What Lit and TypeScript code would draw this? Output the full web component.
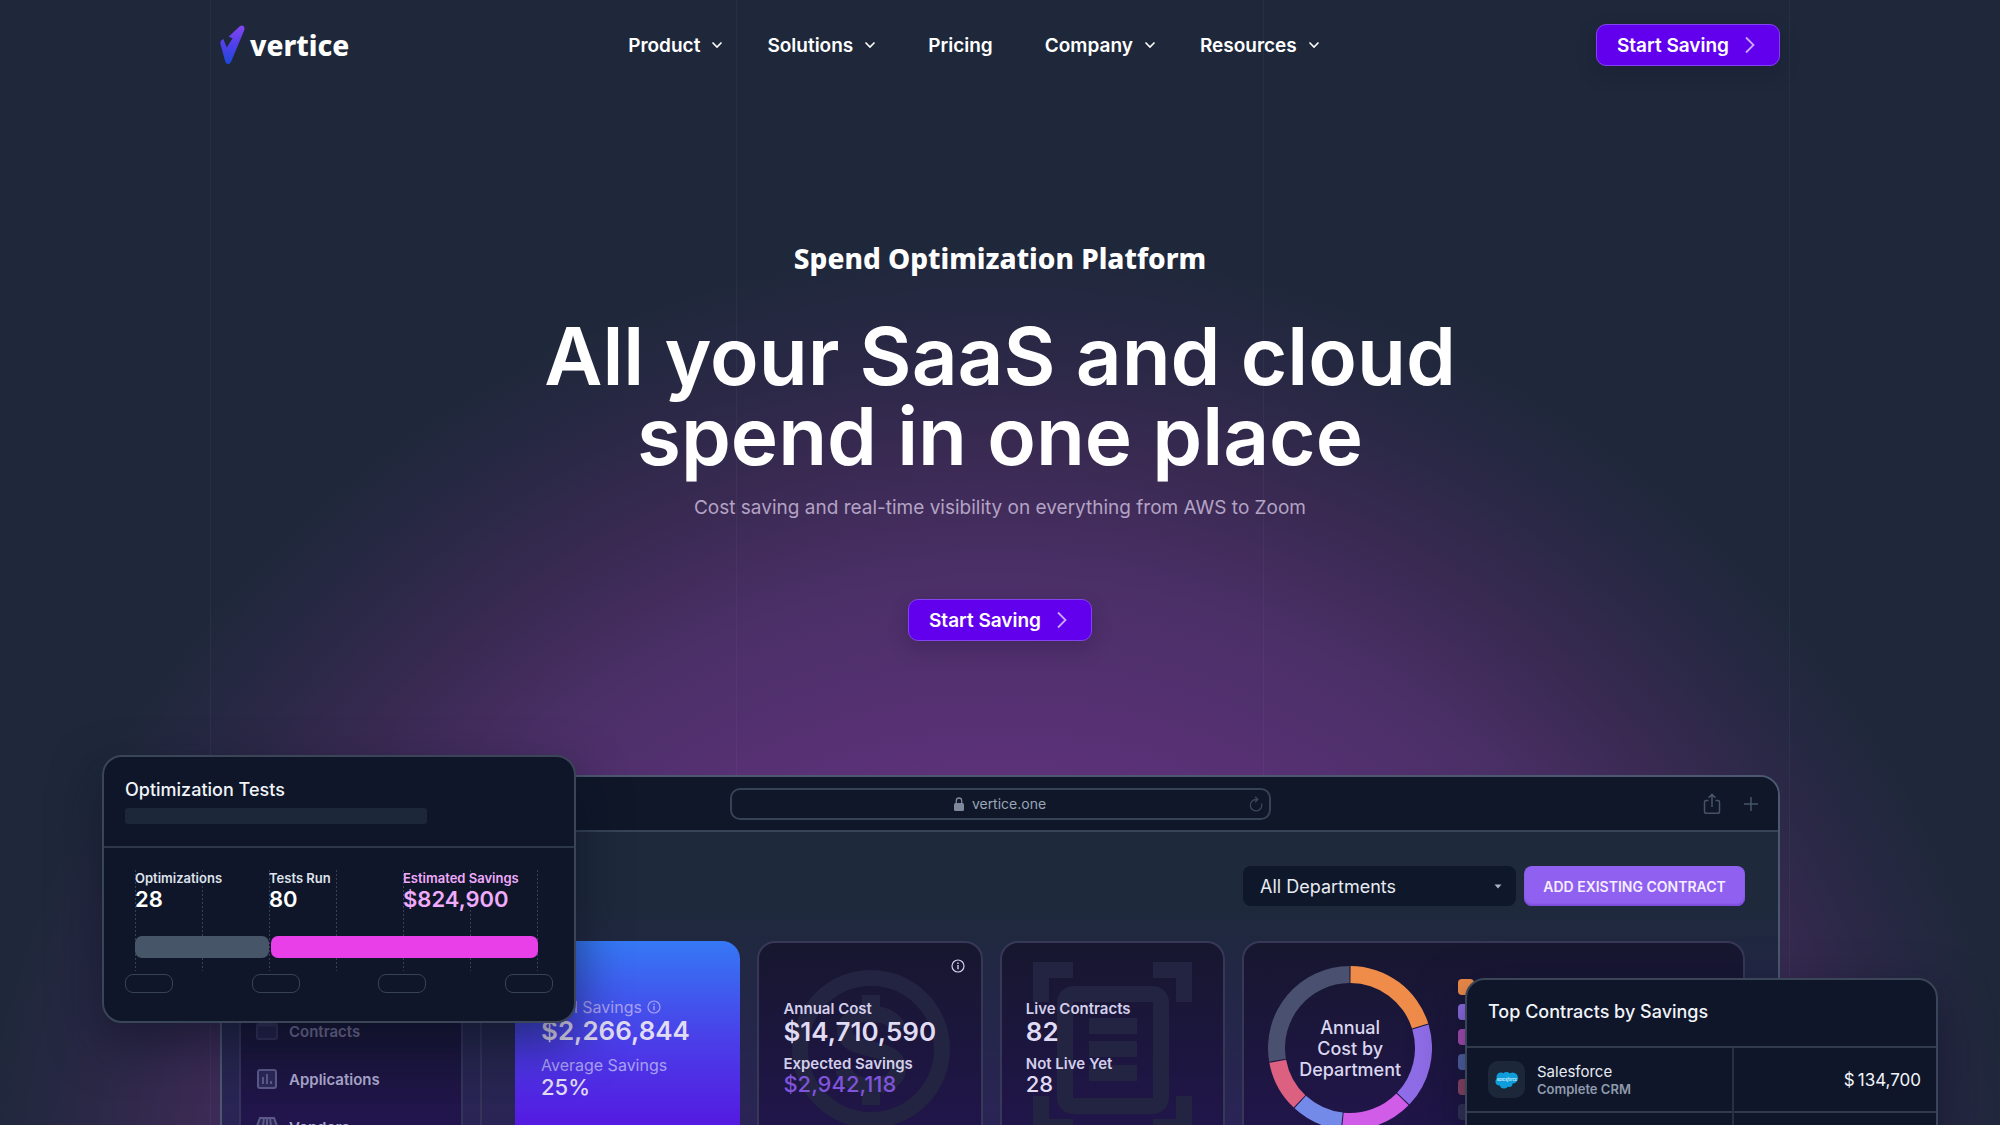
import { LitElement, html, svg, css } from "lit";
import { customElement } from "lit/decorators.js";

interface NavItem { label: string; menu: boolean; }
interface Slice { from: number; to: number; color: string; }

const NAV: NavItem[] = [
  { label: "Product", menu: true },
  { label: "Solutions", menu: true },
  { label: "Pricing", menu: false },
  { label: "Company", menu: true },
  { label: "Resources", menu: true },
];

const SLICES: Slice[] = [
  { from: 0, to: 73, color: "#f08c4a" },
  { from: 73, to: 134, color: "#8f6de8" },
  { from: 134, to: 186, color: "#d05ce8" },
  { from: 186, to: 223, color: "#738ae8" },
  { from: 223, to: 260, color: "#dc6080" },
  { from: 260, to: 360, color: "#4a5070" },
];

const LEGEND = ["#f08c4a", "#8f6de8", "#b350c0", "#5668b0", "#97486a", "#35335a"];

const chevronDown = html`<svg class="chev" viewBox="0 0 12 12" aria-hidden="true"><path d="M1.5 3.5 6 8l4.5-4.5" fill="none" stroke="currentColor" stroke-width="1.6"/></svg>`;
const chevronRight = html`<svg class="arrow" viewBox="0 0 10 18" aria-hidden="true"><path d="M1 1.5 8.5 9 1 16.5" fill="none" stroke="currentColor" stroke-width="1.8"/></svg>`;
const infoIcon = html`<svg class="info" viewBox="0 0 14 14" aria-hidden="true"><circle cx="7" cy="7" r="6" fill="none" stroke="currentColor" stroke-width="1.2"/><path d="M7 6v4.2M7 3.6v1.4" stroke="currentColor" stroke-width="1.4"/></svg>`;

function arc(s: Slice) {
  const at = (deg: number, r: number) => {
    const a = ((deg - 90) * Math.PI) / 180;
    return `${(82 + r * Math.cos(a)).toFixed(2)} ${(82 + r * Math.sin(a)).toFixed(2)}`;
  };
  const f = s.from + 0.4;
  const t = s.to - 0.4;
  return svg`<path fill=${s.color} d="M${at(f, 82)}A82 82 0 0 1 ${at(t, 82)}L${at(t, 65)}A65 65 0 0 0 ${at(f, 65)}Z"/>`;
}

@customElement("app-root")
export class AppRoot extends LitElement {
  static styles = css`
    :host { display: block; font-family: Inter, "Liberation Sans", sans-serif; color: #fff; }
    * { box-sizing: border-box; }
    h1, h2, p, dl, dd, ul { margin: 0; padding: 0; }
    svg { display: block; flex: none; }
    button { font: inherit; color: inherit; border: 0; cursor: pointer; }
    a { color: inherit; text-decoration: none; }

    .page {
      position: relative; height: 100vh; overflow: hidden;
      background: radial-gradient(circle 1040px at 50% 1276px, #68348a 30%, #5b3178 49%, #4b2f67 67%, #3a2a53 79%, #2a2846 89%, #1e283a 100%);
    }
    .guides {
      position: absolute; inset: 0; margin: 0 auto; width: calc(100% - 420px);
      display: grid; grid-template-columns: repeat(3, 1fr);
      border-right: 1px solid rgba(148, 163, 184, .07);
    }
    .guides span { border-left: 1px solid rgba(148, 163, 184, .07); }
    .wrap { position: relative; max-width: 1560px; margin: 0 auto; }

    .top { display: flex; justify-content: space-between; align-items: center; height: 90px; }
    .logo { display: flex; align-items: center; }
    .nav { display: flex; align-items: center; gap: 44px; list-style: none; font-size: 19px; font-weight: 600; }
    .nav a { display: flex; align-items: center; gap: 11px; }
    .nav .plain { padding: 0 8px; }
    .nav .chev { width: 12px; height: 12px; }
    .cta {
      display: inline-flex; align-items: center; gap: 16px; height: 42px; padding: 0 24px 0 20px;
      border: 1px solid #8442f0; border-radius: 10px; background: #6200ee;
      font-size: 19px; font-weight: 600; box-shadow: 0 8px 20px rgba(20, 10, 50, .2);
    }
    .cta .arrow { width: 10px; height: 18px; color: #c9a8fa; }

    .hero { display: flex; flex-direction: column; align-items: center; text-align: center; padding-top: 146px; }
    .eyebrow { font-family: "Noto Sans", sans-serif; font-size: 28px; font-weight: 800; line-height: 44px; }
    h1 { margin-top: 36px; max-width: 960px; font-size: 80px; font-weight: 600; line-height: 80px; }
    .sub { margin-top: 18px; font-size: 19px; line-height: 28px; color: #b3a3c4; }
    .hero .cta { margin-top: 77px; }

    .stage { position: relative; margin-top: 134px; }
    .browser {
      height: 420px; overflow: hidden; border: 2px solid #4b5870;
      border-radius: 20px 20px 0 0;
      background: linear-gradient(#1e293b 0, #1e293b 120px, #2a2456 350px);
    }
    .bar { display: grid; grid-template-columns: 1fr 541px 1fr; align-items: center; height: 55px; background: #0f1729; border-bottom: 2px solid #374357; }
    .url {
      grid-column: 2; display: grid; grid-template-columns: 1fr auto 1fr; align-items: center; height: 32px; padding: 0 6px;
      border: 2px solid #364255; border-radius: 10px; font-size: 14px; color: #9aa5b5;
    }
    .url .addr { grid-column: 2; display: flex; align-items: center; gap: 8px; }
    .url .reload { justify-self: end; color: #3a475a; }
    .tools { display: flex; justify-content: flex-end; gap: 22px; padding-right: 19px; color: #475467; }

    .app { display: grid; grid-template-columns: 260px 1fr; }
    .side { height: 400px; padding: 0 17px; border-right: 2px solid #34335a; }
    .panel { height: 400px; padding: 175px 15px 0; border: 2px solid #34335a; border-width: 0 2px; background: linear-gradient(#171730, #171634 190px, #231550 300px); }
    .panel ul { list-style: none; }
    .panel li { height: 48px; }
    .panel a { display: flex; align-items: center; gap: 11px; height: 48px; font-size: 15px; font-weight: 600; color: #aaa6cc; }
    .panel .dim a { color: #77749a; }
    .panel svg { color: #5c5888; }
    .panel .dim svg { color: #35335a; }
    .main { padding: 34px 33px 0; }
    .actions { display: flex; justify-content: flex-end; gap: 8px; }
    .pick { position: relative; display: flex; width: 273px; }
    .pick select {
      appearance: none; width: 100%; height: 40px; padding: 0 17px; border: 0; border-radius: 8px; background: #0f172a;
      font: inherit; font-size: 18px; color: #e8ebf2;
    }
    .pick svg { position: absolute; right: 14px; top: 18px; color: #a9b3c4; }
    .add { min-width: 221px; height: 40px; padding: 0 12px; border-radius: 8px; background: #9061f0; box-shadow: inset 0 -2px 2px #7d4cdc; font-size: 14px; font-weight: 600; color: #f5eeff; }

    .cards { display: grid; grid-template-columns: repeat(3, 225fr) 502fr; gap: 17px; margin-top: 35px; }
    .card { position: relative; height: 300px; padding: 56px 24px 0; border: 2px solid #373858; border-radius: 18px; background: linear-gradient(#17172f, #22154f 220px); overflow: hidden; }
    .card.blue { padding: 56px 26px 0; border: 0; background: linear-gradient(#3578f5 0, #4a3ee8 100px, #5518e0 190px); }
    .card dl { position: relative; }
    .card dt { display: flex; align-items: center; gap: 5px; font-size: 15px; line-height: 20px; font-weight: 600; color: #d3cfea; }
    .card dd { font-size: 22px; line-height: 20px; font-weight: 500; color: #e0dcf4; }
    .card .big { margin-bottom: 9px; font-size: 26px; line-height: 26px; font-weight: 600; }
    .card .accent { color: #7f54da; }
    .card.blue dt { font-size: 16px; font-weight: 400; color: #a9a0f4; }
    .card.blue dd { line-height: 24px; }
    .card.blue .big { margin-bottom: 10px; line-height: 28px; }
    .info { width: 14px; height: 14px; }
    .card .corner { position: absolute; top: 16px; right: 16px; color: #d3cfea; }
    .mark { position: absolute; color: #232342; }
    .mark.coin { left: 32px; top: 26px; }
    .mark.doc { left: 31px; top: 19px; }
    .card.split { display: flex; padding: 23px 24px 0; gap: 26px; }
    .donut { position: relative; width: 164px; height: 164px; }
    .donut p { position: absolute; inset: 0; display: flex; align-items: center; justify-content: center; text-align: center; font-size: 18px; line-height: 21px; font-weight: 500; color: #dbd7f0; }
    .legend { display: flex; flex-direction: column; gap: 9px; padding-top: 13px; }
    .legend i { width: 16px; height: 16px; border-radius: 4px; }

    .float { position: absolute; border: 2px solid #3a4558; border-radius: 20px; background: #0f1629; overflow: hidden; box-shadow: 0 20px 50px rgba(10, 14, 32, .55); }
    .float h2 { font-size: 18px; line-height: 24px; font-weight: 500; color: #f1f4f9; }
    .tests { left: -118px; top: -20px; width: 474px; height: 268px; }
    .tests header { height: 91px; padding: 21px 21px 0; border-bottom: 2px solid #2c3749; }
    .skeleton { width: 302px; height: 16px; margin-top: 6px; border-radius: 3px; background: #1c273a; }
    .chart {
      margin: 20px 36px 0 31px; height: 103px;
      background: repeating-linear-gradient(#0f1629 0 2px, transparent 2px 4px), repeating-linear-gradient(90deg, #354054 0 1px, transparent 1px 67px);
    }
    .stats { display: grid; grid-template-columns: 134px 134px 1fr; height: 68px; }
    .stats dt { font-size: 13px; line-height: 20px; font-weight: 600; color: #dfe3ec; white-space: nowrap; }
    .stats dd { font-size: 22px; line-height: 22px; font-weight: 600; }
    .stats .pink { color: #f0abfc; }
    .meter { display: grid; grid-template-columns: 134px 1fr; gap: 2px; height: 22px; }
    .meter i { border-radius: 7px; background: #475569; }
    .meter .hot { background: #e83fe8; }
    .pills { display: flex; justify-content: space-between; margin: 3px 21px 0; }
    .pills i { width: 48px; height: 19px; border: 1px solid #364356; border-radius: 8px; }

    .contracts { right: -158px; top: 203px; width: 473px; height: 240px; }
    .contracts h2 { height: 66px; padding: 20px 21px 0; }
    table { width: 100%; border-collapse: collapse; table-layout: fixed; }
    td { height: 65px; padding: 0 21px; border-top: 2px solid #303b4e; vertical-align: middle; }
    td + td { width: 203px; padding: 0 15px; border-left: 2px solid #253044; text-align: right; font-size: 17px; color: #f1f4f9; }
    .vendor { display: flex; align-items: center; gap: 12px; }
    .tile { display: flex; align-items: center; justify-content: center; width: 37px; height: 37px; border-radius: 10px; background: #1c273a; }
    .vendor b { display: block; font-size: 15px; line-height: 18px; font-weight: 400; color: #e8ebf2; }
    .vendor small { display: block; font-size: 13px; line-height: 16px; font-weight: 600; color: #8f9bad; }
  `;

  private renderTop() {
    return html`
      <header class="top">
        <a class="logo" href="#" aria-label="vertice home">
          <svg width="132" height="40" viewBox="0 0 132 40">
            <defs><linearGradient id="v" x1="0" y1="0" x2="0" y2="1"><stop offset="0" stop-color="#8546f0"/><stop offset=".5" stop-color="#5040ea"/><stop offset="1" stop-color="#1d48d8"/></linearGradient></defs>
            <path fill="url(#v)" d="M.2 18Q.2 15.500 3.300 14L6.800 22.500 12.600 13.300 8.600 11.800 19.800 1.200Q22 -.4 23.700 1.300 25 2.800 24.200 5.300L11.200 36.500Q10 39 8.200 39 6 39 5.300 36.800Z"/>
            <text x="30" y="31" fill="#fff" font-family="Noto Sans, sans-serif" font-weight="800" font-size="28">vertice</text>
          </svg>
        </a>
        <nav><ul class="nav">${NAV.map((n) => html`<li class=${n.menu ? "" : "plain"}><a href="#">${n.label}${n.menu ? chevronDown : ""}</a></li>`)}</ul></nav>
        <button class="cta">Start Saving${chevronRight}</button>
      </header>`;
  }

  private renderSidebar() {
    const contracts = svg`<rect x="1" y="4" width="20" height="15" rx="2" fill="#25234a"/><path d="M1 5h20" stroke-width="3"/>`;
    const apps = svg`<rect x="2" y="2" width="18" height="18" rx="2" fill="#2b2856"/><path d="M7 16V9M11 16V6M15 16v-3"/>`;
    const vendors = svg`<path fill="#2b2856" d="M4 2h14l3 8H1ZM3 10v10h16V10M8 2 7 10M11 2v8M14 2l1 8"/>`;
    const items = [
      { label: "Contracts", icon: contracts, dim: true },
      { label: "Applications", icon: apps, dim: false },
      { label: "Vendors", icon: vendors, dim: false },
    ];
    return html`<aside class="side"><nav class="panel"><ul>
      ${items.map((i) => html`<li class=${i.dim ? "dim" : ""}><a href="#"><svg width="22" height="22" viewBox="0 0 22 22" fill="none" stroke="currentColor" stroke-width="2">${i.icon}</svg>${i.label}</a></li>`)}
    </ul></nav></aside>`;
  }

  private renderCards() {
    return html`<div class="cards">
      <section class="card blue"><dl>
        <dt>Total Savings ${infoIcon}</dt><dd class="big">$2,266,844</dd>
        <dt>Average Savings</dt><dd>25%</dd>
      </dl></section>
      <section class="card">
        <svg class="mark coin" width="160" height="160" viewBox="0 0 160 160" fill="none" stroke="currentColor"><circle cx="80" cy="80" r="71" stroke-width="16"/><path d="M80 26v22M80 112v24" stroke-width="18"/><path d="M107 60C104 49 92 45 79 45 63 45 54 52 54 62c0 24 53 12 53 37 0 12-12 18-27 18-14 0-25-6-28-17" stroke-width="16"/></svg>
        <span class="corner">${infoIcon}</span>
        <dl><dt>Annual Cost</dt><dd class="big">$14,710,590</dd><dt>Expected Savings</dt><dd class="accent">$2,942,118</dd></dl>
      </section>
      <section class="card">
        <svg class="mark doc" width="160" height="170" viewBox="0 0 160 170" fill="none" stroke="currentColor" stroke-width="16"><path d="M8 40V8h32M120 8h31v32M8 134v31h32M120 165h31v-31"/><rect x="32" y="32" width="96" height="112" rx="8"/><path d="M56 64h48M56 87h48M56 111h48"/></svg>
        <dl><dt>Live Contracts</dt><dd class="big">82</dd><dt>Not Live Yet</dt><dd>28</dd></dl>
      </section>
      <section class="card split">
        <div class="donut">
          <svg width="164" height="164" viewBox="0 0 164 164" aria-hidden="true">${SLICES.map(arc)}</svg>
          <p>Annual<br>Cost by<br>Department</p>
        </div>
        <div class="legend">${LEGEND.map((c) => html`<i style="background:${c}"></i>`)}</div>
      </section>
    </div>`;
  }

  private renderBrowser() {
    return html`<div class="browser">
      <div class="bar">
        <div class="url">
          <span class="addr"><svg width="10" height="14" viewBox="0 0 10 14"><rect y="6" width="10" height="8" rx="1.500" fill="#7d899b"/><path d="M2.300 6V3.700a2.700 2.700 0 0 1 5.400 0V6" fill="none" stroke="#7d899b" stroke-width="1.300"/></svg>vertice.one</span>
          <svg class="reload" width="14" height="16" viewBox="0 0 14 16" fill="none" stroke="currentColor" stroke-width="1.300"><path d="M12.500 7.500A5.700 5.700 0 1 1 7 3.500h1.500M6 .8 8.800 3.500 6 6.200"/></svg>
        </div>
        <div class="tools">
          <svg width="18" height="22" viewBox="0 0 18 22" fill="none" stroke="currentColor" stroke-width="1.500"><path d="M5.500 7.500H3.200Q1.500 7.500 1.500 9.200V18.500Q1.500 20.300 3.200 20.300H14.800Q16.500 20.300 16.500 18.500V9.200Q16.500 7.500 14.800 7.500H12.500M9 14V1.500M5.500 4.800 9 1.300l3.500 3.500"/></svg>
          <svg width="16" height="22" viewBox="0 0 16 22" stroke="currentColor" stroke-width="1.500"><path d="M8 4v14M1 11h14"/></svg>
        </div>
      </div>
      <div class="app">
        ${this.renderSidebar()}
        <div class="main">
          <div class="actions">
            <div class="pick">
              <select aria-label="Department"><option>All Departments</option></select>
              <svg width="8" height="5" viewBox="0 0 8 5"><path d="M.5.500h7L4 4.500Z" fill="currentColor"/></svg>
            </div>
            <button class="add">ADD EXISTING CONTRACT</button>
          </div>
          ${this.renderCards()}
        </div>
      </div>
    </div>`;
  }

  private renderTests() {
    return html`<section class="float tests">
      <header><h2>Optimization Tests</h2><div class="skeleton"></div></header>
      <div class="chart">
        <dl class="stats">
          <div><dt>Optimizations</dt><dd>28</dd></div>
          <div><dt>Tests Run</dt><dd>80</dd></div>
          <div class="pink"><dt class="pink">Estimated Savings</dt><dd>$824,900</dd></div>
        </dl>
        <div class="meter"><i></i><i class="hot"></i></div>
      </div>
      <div class="pills"><i></i><i></i><i></i><i></i></div>
    </section>`;
  }

  private renderContracts() {
    return html`<section class="float contracts">
      <h2>Top Contracts by Savings</h2>
      <table>
        <tr>
          <td><div class="vendor">
            <span class="tile"><svg width="24" height="18" viewBox="0 0 24 18"><g fill="#0d9ddb"><circle cx="6" cy="6" r="4.500"/><circle cx="11.500" cy="4.800" r="3.800"/><circle cx="17.500" cy="7" r="5.500"/><circle cx="4.500" cy="10.500" r="4"/><circle cx="9" cy="13" r="4.500"/><circle cx="14" cy="12.500" r="3.500"/><path d="M5 5h14v7H5Z"/></g><text x="12" y="10" text-anchor="middle" font-size="4" font-style="italic" font-weight="600" fill="#d6f0fb">salesforce</text></svg></span>
            <span><b>Salesforce</b><small>Complete CRM</small></span>
          </div></td>
          <td>$&thinsp;134,700</td>
        </tr>
        <tr><td></td><td></td></tr>
      </table>
    </section>`;
  }

  render() {
    return html`<div class="page">
      <div class="guides"><span></span><span></span><span></span></div>
      <div class="wrap">
        ${this.renderTop()}
        <main>
          <section class="hero">
            <p class="eyebrow">Spend Optimization Platform</p>
            <h1>All your SaaS and cloud spend in one place</h1>
            <p class="sub">Cost saving and real-time visibility on everything from AWS to Zoom</p>
            <button class="cta">Start Saving${chevronRight}</button>
          </section>
          <div class="stage">${this.renderBrowser()}${this.renderTests()}${this.renderContracts()}</div>
        </main>
      </div>
    </div>`;
  }
}
